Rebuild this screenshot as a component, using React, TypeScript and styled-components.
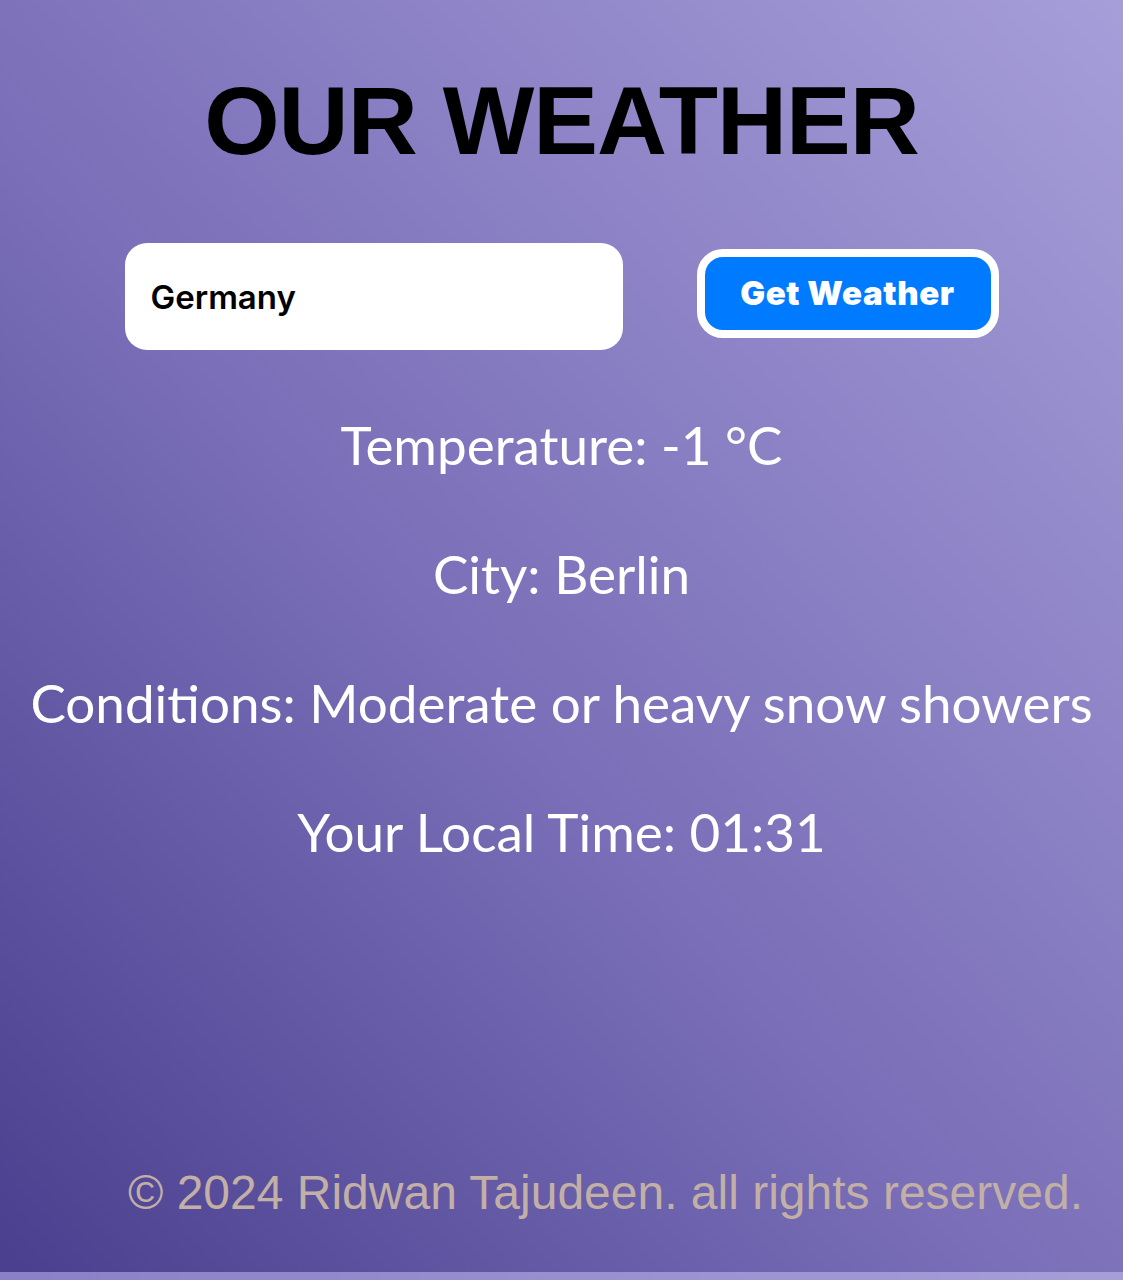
import styled, { createGlobalStyle } from "styled-components";

const GlobalStyle = createGlobalStyle`
  html, body {
    margin: 0;
    padding: 0;
  }
  body {
    background: linear-gradient(to right, #8a80c6, #a69ed8);
    min-height: 1280px;
  }
`;

const Page = styled.div`
  height: 1272px;
  display: flex;
  flex-direction: column;
  align-items: center;
  background: linear-gradient(to top right, #4a3f8e 0%, #7a6fb8 45%, #a69ed9 100%);
  box-sizing: border-box;
  padding-top: 71px;
`;

const Title = styled.h1`
  margin: 0;
  font-family: "Liberation Sans", Arial, sans-serif;
  font-weight: 700;
  font-size: 97px;
  line-height: 100px;
  letter-spacing: -1px;
  color: #000;
`;

const SearchRow = styled.form`
  display: flex;
  align-items: center;
  gap: 74px;
  margin-top: 72px;
`;

const CityInput = styled.input`
  width: 498px;
  height: 107px;
  box-sizing: border-box;
  border: none;
  border-radius: 22px;
  background: #fff;
  padding: 0 26px;
  font-family: Inter, "Noto Sans", sans-serif;
  font-weight: 600;
  font-size: 33px;
  color: #000;
  outline: none;
`;

const SubmitButton = styled.button`
  width: 302px;
  height: 89px;
  box-sizing: border-box;
  border: 8px solid #fff;
  border-radius: 26px;
  background: #007bff;
  color: #fff;
  font-family: Inter, "Noto Sans", sans-serif;
  font-weight: 900;
  font-size: 33px;
  letter-spacing: 0.6px;
  cursor: pointer;
  margin-top: -7px;
`;

const Info = styled.div`
  display: flex;
  flex-direction: column;
  align-items: center;
  gap: 70px;
  margin-top: 65px;
`;

const InfoLine = styled.p`
  margin: 0;
  font-family: Lato, "Open Sans", sans-serif;
  font-size: 53px;
  line-height: 59px;
  color: #fff;
  white-space: nowrap;
`;

const Footer = styled.footer`
  margin-top: auto;
  align-self: stretch;
  text-align: right;
  padding: 0 40px 52px 0;
  font-family: "Liberation Sans", Arial, sans-serif;
  font-size: 48px;
  line-height: 54px;
  color: #c2b0a6;
`;

export default function App() {
  return (
    <>
      <GlobalStyle />
      <Page>
        <Title>OUR WEATHER</Title>
        <SearchRow onSubmit={(e) => e.preventDefault()}>
          <CityInput defaultValue="Germany" />
          <SubmitButton type="submit">Get Weather</SubmitButton>
        </SearchRow>
        <Info>
          <InfoLine>Temperature: -1 °C</InfoLine>
          <InfoLine>City: Berlin</InfoLine>
          <InfoLine>Conditions: Moderate or heavy snow showers</InfoLine>
          <InfoLine>Your Local Time: 01:31</InfoLine>
        </Info>
        <Footer>© 2024 Ridwan Tajudeen. all rights reserved.</Footer>
      </Page>
    </>
  );
}
